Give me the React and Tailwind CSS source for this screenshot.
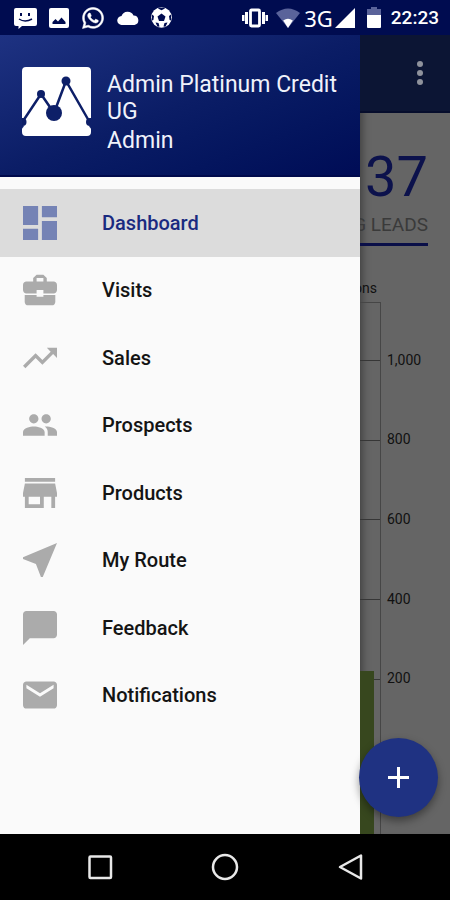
import { FaWhatsapp } from "react-icons/fa";

const menu = [
  {
    label: "Dashboard",
    viewBox: "3 3 18 18",
    path: "M3 13h8V3H3v10zm0 8h8v-6H3v6zm10 0h8V11h-8v10zm0-18v6h8V3h-8z",
    active: true,
  },
  {
    label: "Visits",
    viewBox: "2 2 20 20",
    path: "M10 16v-1H3.01L3 19c0 1.11.89 2 2 2h14c1.11 0 2-.89 2-2v-4h-7v1h-4zm10-9h-4.01V5l-2-2h-4l-2 2v2H4c-1.1 0-2 .9-2 2v3c0 1.11.89 2 2 2h6v-2h4v2h6c1.1 0 2-.9 2-2V9c0-1.1-.9-2-2-2zm-6 0h-4V5h4v2z",
  },
  {
    label: "Sales",
    viewBox: "2 2 20 20",
    path: "M16 6l2.29 2.29-4.88 4.88-4-4L2 16.59 3.41 18l6-6 4 4 6.3-6.29L22 12V6z",
  },
  {
    label: "Prospects",
    viewBox: "1 1 22 22",
    path: "M16 11c1.66 0 2.99-1.34 2.99-3S17.66 5 16 5c-1.66 0-3 1.34-3 3s1.34 3 3 3zm-8 0c1.66 0 2.99-1.34 2.99-3S9.66 5 8 5C6.34 5 5 6.34 5 8s1.34 3 3 3zm0 2c-2.33 0-7 1.17-7 3.5V19h14v-2.5c0-2.33-4.67-3.5-7-3.5zm8 0c-.29 0-.62.02-.97.05 1.16.84 1.97 1.97 1.97 3.45V19h6v-2.5c0-2.33-4.67-3.5-7-3.5z",
  },
  {
    label: "Products",
    viewBox: "3 3 18 18",
    path: "M20 4H4v2h16V4zm1 10v-2l-1-5H4l-1 5v2h1v6h10v-6h4v6h2v-6h1zm-9 4H6v-4h6v4z",
  },
  {
    label: "My Route",
    viewBox: "3 3 18 18",
    path: "M21 3L3 10.53v.98l6.84 2.65L12.48 21h.98L21 3z",
  },
  {
    label: "Feedback",
    viewBox: "2 2 20 20",
    path: "M20 2H4c-1.1 0-2 .9-2 2v18l4-4h14c1.1 0 2-.9 2-2V4c0-1.1-.9-2-2-2z",
  },
  {
    label: "Notifications",
    viewBox: "2 2 20 20",
    path: "M20 4H4c-1.1 0-1.99.9-1.99 2L2 18c0 1.1.9 2 2 2h16c1.1 0 2-.9 2-2V6c0-1.1-.9-2-2-2zm0 4l-8 5-8-5V6l8 5 8-5v2z",
  },
];

const ticks = ["1,000", "800", "600", "400", "200"];

function StatusBar() {
  return (
    <div className="flex h-[35px] shrink-0 items-center justify-between bg-[#000c50] pr-[11px] pl-3.5 text-white">
      <div className="flex items-center gap-3">
        <svg className="h-[22px] w-[23px]" viewBox="0 0 23 22">
          <path fill="currentColor" d="M2 1h19a2 2 0 0 1 2 2v14a2 2 0 0 1-2 2H8l-3.500 3v-3H2a2 2 0 0 1-2-2V3a2 2 0 0 1 2-2z" />
          <path fill="#000c50" d="M6 6h2v3H6zM14 6h2v3h-2z" />
          <path fill="none" stroke="#000c50" strokeWidth="1.500" d="M5 12q6 4 13 0" />
        </svg>
        <svg className="h-5 w-5" viewBox="0 0 20 20">
          <rect width="20" height="20" rx="2" fill="currentColor" />
          <path fill="#000c50" d="M3.500 16v-2l3-3 2.500 2.500 3.500-4 4 4.500v2z" />
        </svg>
        <FaWhatsapp className="h-6 w-6" stroke="currentColor" strokeWidth="12" />
        <svg className="h-3.5 w-[22px]" viewBox="0 0 22 14">
          <path fill="currentColor" d="M5 14a4.500 4.500 0 0 1-.5-9A6.500 6.500 0 0 1 16.500 4.500 4.800 4.800 0 0 1 17.500 14z" />
        </svg>
        <svg className="h-[21px] w-[21px]" viewBox="0 0 21 21">
          <circle cx="10.500" cy="10.500" r="10.300" fill="currentColor" />
          <g fill="#000c50">
            <path d="M10.500 6.500l4 2.900-1.500 4.600H8l-1.500-4.600z" />
            <path d="M7 1.500l3.500 1.800L14 1.500l-1-.8H8zM1 7.500l2 1.500-.6 4L1 13.500zM20 7.500l-2 1.500.6 4 1.400.5zM4.500 15.500l3 .5 1 3.500-2 .3zM16.500 15.500l-3 .5-1 3.500 2 .3z" />
          </g>
        </svg>
      </div>
      <div className="flex items-center">
        <svg className="mr-2 h-5 w-[26px]" viewBox="0 0 26 20">
          <rect x="8.500" y="2" width="9" height="16" rx="1" fill="none" stroke="currentColor" strokeWidth="2.800" />
          <path fill="currentColor" d="M3 4h3v12H3zM20 4h3v12h-3zM0 7h2.500v6H0zM23.500 7H26v6h-2.500z" />
        </svg>
        <svg className="mr-1 h-5 w-6" viewBox="0 0 24 20">
          <path fill="#5a639a" d="M0 5Q12-4 24 5L12 20z" />
          <path fill="currentColor" d="M7.200 12.500q4.800-3.500 9.600 0L12 20z" />
        </svg>
        <span className="mr-0.5 font-['Noto_Sans'] text-[22px] leading-6">3G</span>
        <svg className="mr-3 h-5 w-5" viewBox="0 0 20 20">
          <path fill="currentColor" d="M20 0v20H0z" />
        </svg>
        <svg className="mr-2.5 h-[21px] w-3.5" viewBox="0 0 14 21">
          <path fill="#5a639a" d="M4 0h6v2h4v8H0V2h4z" />
          <path fill="currentColor" d="M0 8h14v12a1 1 0 0 1-1 1H1a1 1 0 0 1-1-1z" />
        </svg>
        <span className="text-[19px] leading-6 font-medium">22:23</span>
      </div>
    </div>
  );
}

function Logo() {
  return (
    <svg className="h-[69px] w-[69px] shrink-0" viewBox="0 0 69 69">
      <path
        fill="#fff"
        d="M4 0h61a4 4 0 0 1 4 4v54q-3 1-1 2.500 1 .5 1 2V65a4 4 0 0 1-4 4H4a4 4 0 0 1-4-4v-2.500q0-1.500 1-2 2-1.500-1-2.500V4a4 4 0 0 1 4-4z"
      />
      <g fill="#0d1f68">
        <path fill="none" stroke="#0d1f68" strokeWidth="2.500" d="M1 54l18-27 13 19 12-32 23 40" />
        <circle cx="19" cy="27" r="4" />
        <circle cx="44" cy="14" r="4.500" />
        <circle cx="32" cy="46" r="8" />
        <circle cx="0.500" cy="55" r="4" />
        <circle cx="68" cy="55" r="4" />
      </g>
    </svg>
  );
}

function Drawer() {
  return (
    <aside className="flex w-4/5 shrink-0 flex-col bg-[#fafafa]">
      <header className="flex h-[142px] items-start gap-4 border-b-2 border-[#000a4c] bg-linear-to-br from-[#1e3282] via-[#0b1d66] to-[#000c56] pt-8 pr-2 pl-[22px] text-[23px] text-[#f0f2fb]">
        <Logo />
        <div className="pt-1">
          <p className="leading-[27px]">Admin Platinum Credit UG</p>
          <p className="leading-8">Admin</p>
        </div>
      </header>
      <nav className="pt-3">
        <ul className="grid h-[540px] grid-rows-8">
          {menu.map((item) => (
            <li key={item.label}>
              <a
                href="#"
                className={`flex h-full items-center gap-[45px] pl-[23px] text-[20px] ${
                  item.active ? "bg-[#dcdcdc] font-medium text-[#1a2a80]" : "font-medium text-[#141414]"
                }`}
              >
                <svg
                  className={`h-[34px] w-[34px] ${item.active ? "text-[#7583b5]" : "text-[#ababab]"}`}
                  viewBox={item.viewBox}
                  fill="currentColor"
                >
                  <path d={item.path} />
                </svg>
                {item.label}
              </a>
            </li>
          ))}
        </ul>
      </nav>
    </aside>
  );
}

function Page() {
  return (
    <main className="flex min-w-0 flex-1 flex-col overflow-hidden bg-[#656565] shadow-[inset_8px_0_8px_-6px_#00000066]">
      <div className="flex h-[78px] items-center justify-end border-b-2 border-[#060d2c] bg-[#0c1534] pr-5">
        <button type="button" aria-label="More options" className="flex h-8 w-5 items-center justify-center">
          <svg className="h-6 w-1.5" viewBox="0 0 6 24" fill="#8f929c">
            <circle cx="3" cy="3" r="3" />
            <circle cx="3" cy="12" r="3" />
            <circle cx="3" cy="21" r="3" />
          </svg>
        </button>
      </div>

      <section className="mr-[22px] flex flex-col items-end border-b-3 border-[#0a0f48] pt-[34px] pb-1 whitespace-nowrap">
        <p className="text-[56px] leading-[60px] text-[#0c124c]">37</p>
        <h2 className="pt-1 text-[19px] leading-7 text-[#3a3a3a]">MISSING LEADS</h2>
      </section>

      <div className="mr-[73px] flex justify-end pt-8 pb-1 text-[14px] leading-5 text-[#111111]">
        <span>Transactions</span>
      </div>
      <div className="flex flex-1">
        <div className="grid min-w-0 flex-1 border-t border-r border-[#464646]">
          <div className="col-start-1 row-start-1 mt-[18px] grid h-[398px] grid-rows-5">
            {ticks.map((tick) => (
              <div key={tick} className="flex items-center">
                <div className="h-px w-full bg-[#363636]" />
              </div>
            ))}
          </div>
          <div className="col-start-1 row-start-1 mr-1.5 h-[163px] self-end bg-[#37471e]" />
        </div>
        <div className="mt-[18px] grid h-[398px] w-[69px] grid-rows-5 pl-1.5 text-[14px] leading-5 text-[#111111]">
          {ticks.map((tick) => (
            <span key={tick} className="self-center">
              {tick}
            </span>
          ))}
        </div>
      </div>
    </main>
  );
}

function NavigationBar() {
  return (
    <div className="grid h-[66px] shrink-0 grid-cols-3 bg-black px-[37px] text-[#e8e8e8]">
      <button type="button" aria-label="Recent apps" className="flex items-center justify-center">
        <svg className="h-7 w-7" viewBox="0 0 28 28" fill="none" stroke="currentColor" strokeWidth="2.500">
          <rect x="3.500" y="3.500" width="21.500" height="21.500" rx="1" />
        </svg>
      </button>
      <button type="button" aria-label="Home" className="flex items-center justify-center">
        <svg className="h-7 w-7" viewBox="0 0 28 28" fill="none" stroke="currentColor" strokeWidth="2.500">
          <circle cx="14" cy="14" r="12" />
        </svg>
      </button>
      <button type="button" aria-label="Back" className="flex items-center justify-center">
        <svg className="h-7 w-7" viewBox="0 0 28 28" fill="none" stroke="currentColor" strokeWidth="2.500" strokeLinejoin="round">
          <path d="M25 2.500v23L4 14z" />
        </svg>
      </button>
    </div>
  );
}

export default function App() {
  return (
    <div className="flex min-h-screen flex-col font-[Roboto,sans-serif]">
      <StatusBar />
      <div className="relative flex flex-1">
        <Drawer />
        <Page />
        <button
          type="button"
          aria-label="Add"
          className="absolute right-3 bottom-[17px] flex h-[79px] w-[79px] items-center justify-center rounded-full bg-[#1f3282] shadow-[0_4px_8px_#00000066]"
        >
          <svg className="h-[21px] w-[21px]" viewBox="0 0 21 21" stroke="#fff" strokeWidth="3">
            <path d="M10.500 0v21M0 10.500h21" />
          </svg>
        </button>
      </div>
      <NavigationBar />
    </div>
  );
}
